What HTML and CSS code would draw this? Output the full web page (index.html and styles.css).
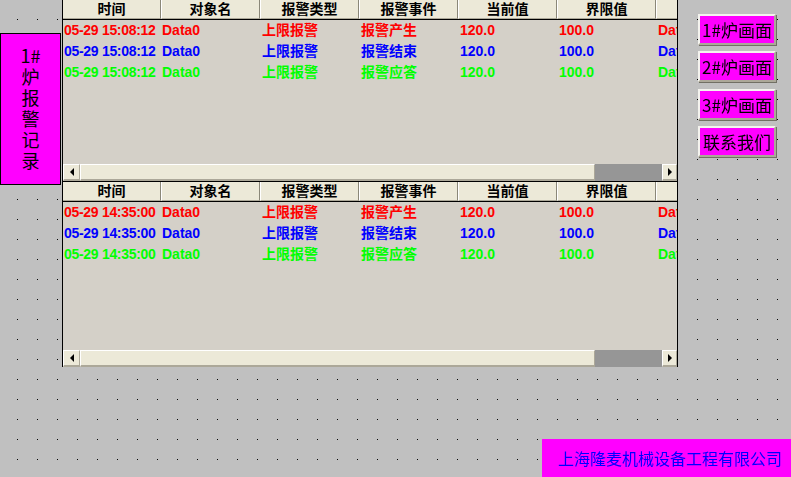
FILE: index.html
```html
<!DOCTYPE html>
<html lang="zh-CN">
<head>
    <meta charset="UTF-8">
    <title>1#炉报警记录</title>
    <link rel="stylesheet" href="styles.css">
</head>
<body>

    <div class="screen">
        <div class="side-title">
            <span>1#</span><span>炉</span><span>报</span><span>警</span><span>记</span><span>录</span>
        </div>

        <div class="tables">
            <div class="alarm-table first">
                <div class="head">
                    <div>时间</div><div>对象名</div><div>报警类型</div><div>报警事件</div><div>当前值</div><div>界限值</div><div>报警描述</div>
                </div>
                <div class="rows short">
                    <div class="row red">
                        <div class="time">05-29 15:08:12</div><div>Data0</div><div>上限报警</div><div>报警产生</div><div>120.0</div><div>100.0</div><div>Data0</div>
                    </div>
                    <div class="row blue">
                        <div class="time">05-29 15:08:12</div><div>Data0</div><div>上限报警</div><div>报警结束</div><div>120.0</div><div>100.0</div><div>Data0</div>
                    </div>
                    <div class="row green">
                        <div class="time">05-29 15:08:12</div><div>Data0</div><div>上限报警</div><div>报警应答</div><div>120.0</div><div>100.0</div><div>Data0</div>
                    </div>
                </div>
                <div class="scroll">
                    <div class="arrow left"><i></i></div>
                    <div class="thumb"></div>
                    <div class="track"></div>
                    <div class="arrow right"><i></i></div>
                </div>
            </div>

            <div class="alarm-table">
                <div class="head">
                    <div>时间</div><div>对象名</div><div>报警类型</div><div>报警事件</div><div>当前值</div><div>界限值</div><div>报警描述</div>
                </div>
                <div class="rows">
                    <div class="row red">
                        <div class="time">05-29 14:35:00</div><div>Data0</div><div>上限报警</div><div>报警产生</div><div>120.0</div><div>100.0</div><div>Data0</div>
                    </div>
                    <div class="row blue">
                        <div class="time">05-29 14:35:00</div><div>Data0</div><div>上限报警</div><div>报警结束</div><div>120.0</div><div>100.0</div><div>Data0</div>
                    </div>
                    <div class="row green">
                        <div class="time">05-29 14:35:00</div><div>Data0</div><div>上限报警</div><div>报警应答</div><div>120.0</div><div>100.0</div><div>Data0</div>
                    </div>
                </div>
                <div class="scroll">
                    <div class="arrow left"><i></i></div>
                    <div class="thumb"></div>
                    <div class="track"></div>
                    <div class="arrow right"><i></i></div>
                </div>
            </div>
        </div>

        <div class="menu">
            <button class="menu-btn">1#炉画面</button>
            <button class="menu-btn">2#炉画面</button>
            <button class="menu-btn">3#炉画面</button>
            <button class="menu-btn">联系我们</button>
        </div>
    </div>

    <div class="footer">
        <div class="company">上海隆麦机械设备工程有限公司</div>
    </div>

</body>
</html>
```

FILE: styles.css
```css
html {
    background-color: #c0c0c0;
}
body {
    margin: 0;
    width: 791px;
    height: 477px;
    overflow: hidden;
    font-family: "Liberation Sans", "Noto Sans CJK SC", sans-serif;
}
/* dotted editor grid */
body::before {
    content: "";
    position: fixed;
    inset: 0;
    z-index: -1;
    background: linear-gradient(90deg, #000 1px, transparent 1px) 17px 0 / 20px 20px;
    -webkit-mask: linear-gradient(#000 1px, transparent 1px) 0 19px / 20px 20px;
    mask: linear-gradient(#000 1px, transparent 1px) 0 19px / 20px 20px;
}
.screen {
    display: flex;
    align-items: flex-start;
    height: 367px;
}
.side-title {
    box-sizing: border-box;
    width: 61px;
    height: 152px;
    margin-top: 33px;
    background-color: #ff00ff;
    border: 1px solid #000;
    display: flex;
    flex-direction: column;
    align-items: center;
    justify-content: center;
    font-family: "Noto Sans CJK SC", sans-serif;
    font-size: 18px;
    line-height: 21px;
    color: #000;
    padding-bottom: 2px;
}
.tables {
    width: 616px;
    margin-left: 1px;
}
.alarm-table {
    border: 1px solid #000;
    border-bottom: none;
    background-color: #d4d0c8;
    overflow: hidden;
}
.alarm-table.first {
    margin-top: -1px;
}
.head,
.row {
    display: grid;
    grid-template-columns: 98px repeat(6, 99px);
    width: 692px;
}
.head {
    height: 19px;
    border-bottom: 1px solid #000;
    background-color: #ece9d8;
}
.head div {
    box-sizing: border-box;
    border-left: 1px solid #fff;
    border-right: 1px solid #8a8778;
    border-bottom: 1px solid #aca899;
    text-align: center;
    font-weight: bold;
    font-size: 14px;
    line-height: 18px;
    color: #000;
}
.head div:first-child {
    border-left: none;
}
.rows {
    height: 148px;
}
.rows.short {
    height: 144px;
}
.row {
    height: 21px;
    font-size: 14px;
    font-weight: bold;
    line-height: 21px;
}
.row div {
    padding-left: 1px;
    white-space: nowrap;
    overflow: hidden;
}
.row div:nth-child(n+3) {
    padding-left: 2px;
}
.row .time {
    letter-spacing: -0.3px;
}
.red { color: #ff0000; }
.blue { color: #0000ff; }
.green { color: #00ff00; }

.scroll {
    display: flex;
    height: 17px;
}
.arrow {
    box-sizing: border-box;
    width: 17px;
    background-color: #ece9d8;
    border-top: 1px solid #fff;
    border-left: 1px solid #fff;
    border-right: 1px solid #aca899;
    border-bottom: 2px solid #aca899;
    display: flex;
    align-items: center;
    justify-content: center;
}
.arrow.right {
    width: 15px;
}
.arrow i {
    width: 0;
    height: 0;
    border-top: 4px solid transparent;
    border-bottom: 4px solid transparent;
}
.arrow.left i {
    border-right: 4px solid #000;
}
.arrow.right i {
    border-left: 4px solid #000;
}
.thumb {
    box-sizing: border-box;
    width: 515px;
    background-color: #ece9d8;
    border-top: 1px solid #fff;
    border-left: 1px solid #fff;
    border-right: 1px solid #aca899;
    border-bottom: 2px solid #aca899;
}
.track {
    width: 67px;
    background-color: #969696;
}

.menu {
    display: flex;
    flex-direction: column;
    gap: 6.4px;
    margin-left: 20px;
    padding-top: 14px;
}
.menu-btn {
    box-sizing: border-box;
    width: 78px;
    height: 31px;
    padding: 0;
    background-color: #ff00ff;
    border-top: 2px solid #f4f3ee;
    border-left: 2px solid #f4f3ee;
    border-right: 2px solid #aca899;
    border-bottom: 2px solid #aca899;
    box-shadow: 1px 1px 0 #716f64;
    font-family: "Noto Sans CJK SC", sans-serif;
    font-size: 17px;
    line-height: 27px;
    color: #000;
}

.footer {
    display: flex;
    justify-content: flex-end;
    margin-top: 72px;
}
.company {
    width: 249px;
    height: 38px;
    background-color: #ff00ff;
    box-sizing: border-box;
    padding-left: 16px;
    font-family: "Noto Sans CJK SC", sans-serif;
    font-size: 16px;
    line-height: 38px;
    color: #0000ff;
}
```
